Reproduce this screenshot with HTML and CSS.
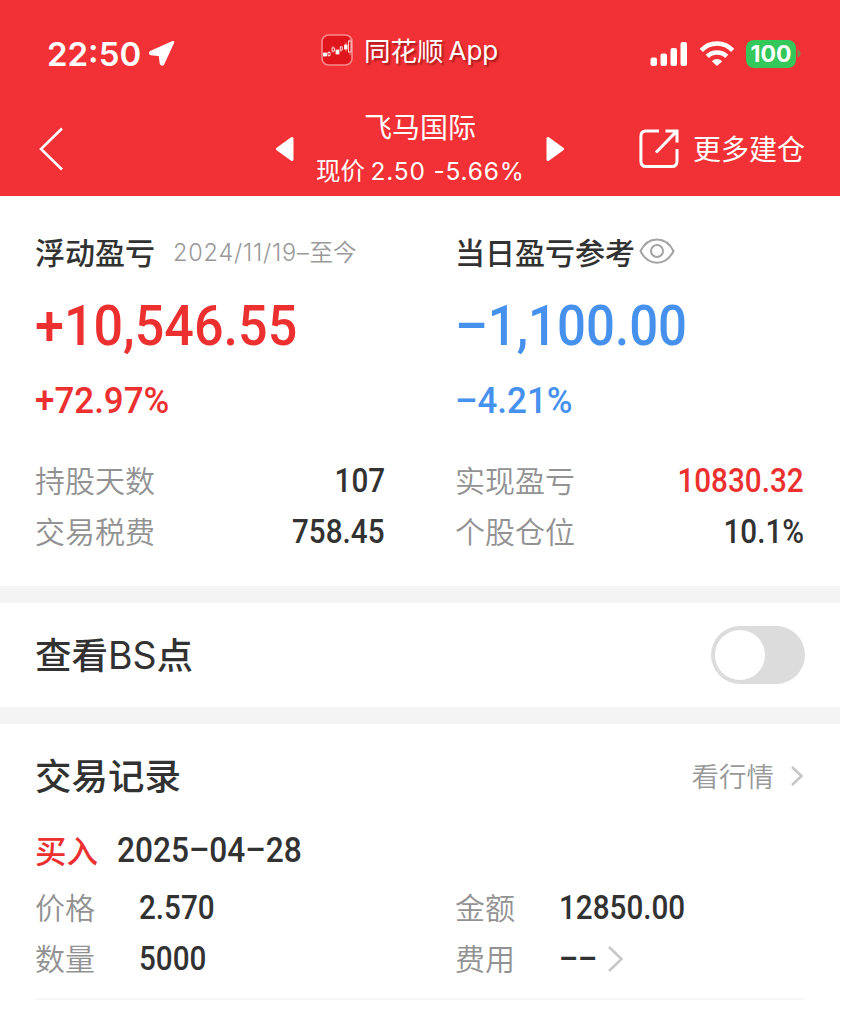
FILE: index.html
```html
<!DOCTYPE html>
<html lang="zh-CN">
<head>
    <meta charset="UTF-8">
    <meta name="viewport" content="width=device-width, initial-scale=1.0">
    <title>飞马国际</title>
    <link rel="stylesheet" href="styles.css">
</head>
<body>

<div class="page">
    <header class="header">
        <!-- Status bar -->
        <div class="status-bar">
            <div class="status-left">
                <span class="time">22:50</span>
                <svg class="location" width="27" height="27" viewBox="0 0 27 27">
                    <path d="M25 2.200 L2.600 12.200 Q1.600 13.500 3.200 14 L12 15 L13 23.500 Q14 25.500 15.200 23.500 Z" fill="#fff" stroke="#fff" stroke-width="2.600" stroke-linejoin="round"/>
                </svg>
            </div>
            <div class="brand">
                <svg class="brand-logo" width="32" height="32" viewBox="0 0 32 32">
                    <rect x="1" y="1" width="30" height="30" rx="6.500" fill="#e0161c" stroke="#f98a8c" stroke-width="1.600"/>
                    <g fill="#fff" stroke="#fff" stroke-width="0.800">
                        <rect x="2.500" y="19" width="3" height="3"/>
                        <path d="M8 17v6M12 12v7M20 12v6M25 8.500v9M29 5v16" opacity="0.6"/>
                        <rect x="7" y="18.500" width="2" height="3" fill="#e0161c"/>
                        <rect x="11" y="14" width="2.500" height="3" fill="#e0161c"/>
                        <rect x="15" y="16" width="3" height="4"/>
                        <rect x="19.200" y="13" width="2" height="3" fill="#e0161c"/>
                        <rect x="23.500" y="11" width="2.600" height="4"/>
                        <rect x="27.500" y="7" width="2.500" height="11" fill="#e0161c"/>
                    </g>
                </svg>
                <span class="brand-name">同花顺</span><span class="brand-app">App</span>
            </div>
            <div class="status-right">
                <svg width="38" height="26" viewBox="0 0 38 26" fill="#fff">
                    <rect x="0.500" y="16.500" width="6.500" height="8.500" rx="2"/>
                    <rect x="10.500" y="12.500" width="6.500" height="12.500" rx="2"/>
                    <rect x="20.500" y="7" width="6.500" height="18" rx="2"/>
                    <rect x="30.500" y="1" width="6.500" height="24" rx="2"/>
                </svg>
                <svg class="wifi" width="36" height="26" viewBox="0 0 36 26" fill="none" stroke="#fff" stroke-width="4.600">
                    <path d="M2.300 9.300 C11 0.300 25 0.300 33.700 9.300"/>
                    <path d="M8.300 15.300 C13.500 10.300 22.500 10.300 27.700 15.300"/>
                    <path d="M18 25 L12.800 20.200 Q18 15.800 23.200 20.200 Z" fill="#fff" stroke="none"/>
                </svg>
                <span class="battery">100</span>
                <svg width="4" height="9" viewBox="0 0 4 9"><path d="M0.500 0.500 Q3.500 1.500 3.500 4.500 T0.500 8.500 Z" fill="#7c8a48"/></svg>
            </div>
        </div>

        <!-- Navigation -->
        <nav class="nav-bar">
            <svg class="back" width="26" height="44" viewBox="0 0 26 44" fill="none" stroke="#fff" stroke-width="2.600">
                <path d="M24 1.500 L3 22 L24 42.500"/>
            </svg>
            <div class="stock">
                <svg width="20" height="26" viewBox="0 0 20 26"><path d="M2.500 13 L17 2.500 V23.500 Z" fill="#fff" stroke="#fff" stroke-width="3" stroke-linejoin="round"/></svg>
                <div class="stock-info">
                    <div class="stock-name">飞马国际</div>
                    <div class="stock-price">现价 <span>2.50 -5.66%</span></div>
                </div>
                <svg width="20" height="26" viewBox="0 0 20 26"><path d="M17.500 13 L3 2.500 V23.500 Z" fill="#fff" stroke="#fff" stroke-width="3" stroke-linejoin="round"/></svg>
            </div>
            <div class="more">
                <svg width="40" height="40" viewBox="0 0 40 40" fill="none" stroke="#fff" stroke-width="3">
                    <path d="M20 1.900 H7 Q1.900 1.900 1.900 7 V32 Q1.900 37.600 7 37.600 H33 Q38 37.600 38 32 V20"/>
                    <path d="M26.500 1.900 H38 V13.500 M38 1.900 L17 23.500"/>
                </svg>
                <span>更多建仓</span>
            </div>
        </nav>
    </header>

    <!-- Profit summary -->
    <section class="summary">
        <div class="summary-col">
            <div class="summary-title">浮动盈亏 <span class="period"><span class="period-num">2024/11/19–</span>至今</span></div>
            <div class="amount red">+10,546.55</div>
            <div class="percent red">+72.97%</div>
            <div class="row"><span class="label">持股天数</span><span class="num">107</span></div>
            <div class="row"><span class="label">交易税费</span><span class="num">758.45</span></div>
        </div>
        <div class="summary-col">
            <div class="summary-title">当日盈亏参考
                <svg class="eye" width="36" height="26" viewBox="0 0 36 26" fill="none" stroke="#a3a3a3" stroke-width="2">
                    <path d="M1.500 13 C9 -2.500 27 -2.500 34.500 13 C27 28.500 9 28.500 1.500 13 Z"/>
                    <circle cx="18" cy="13" r="6"/>
                </svg>
            </div>
            <div class="amount blue">–1,100.00</div>
            <div class="percent blue">–4.21%</div>
            <div class="row"><span class="label">实现盈亏</span><span class="num red">10830.32</span></div>
            <div class="row"><span class="label">个股仓位</span><span class="num">10.1%</span></div>
        </div>
    </section>

    <section class="bs">
        <div class="bs-title">查看<span>BS</span>点</div>
        <div class="switch"><div class="knob"></div></div>
    </section>

    <!-- Trade records -->
    <section class="records">
        <div class="records-head">
            <h2>交易记录</h2>
            <div class="quotes">
                <span>看行情</span>
                <svg width="14" height="22" viewBox="0 0 14 22" fill="none" stroke="#c6c6c6" stroke-width="2.600"><path d="M2 2 L11.500 11 L2 20"/></svg>
            </div>
        </div>
        <div class="record">
            <div class="record-title"><span class="buy">买入</span><span class="date">2025–04–28</span></div>
            <div class="record-grid">
                <div class="cell"><span class="label">价格</span><span class="num">2.570</span></div>
                <div class="cell"><span class="label">金额</span><span class="num">12850.00</span></div>
                <div class="cell"><span class="label">数量</span><span class="num">5000</span></div>
                <div class="cell"><span class="label">费用</span><span class="num">––</span>
                    <svg class="arrow" width="18" height="28" viewBox="0 0 18 28" fill="none" stroke="#c8c8c8" stroke-width="2.600"><path d="M2 2 L14.500 14 L2 26"/></svg>
                </div>
            </div>
        </div>
    </section>
</div>

</body>
</html>
```
FILE: styles.css
```css
* {
    box-sizing: border-box;
}
body {
    margin: 0;
    background-color: #fff;
    color: #323232;
    font-family: "Noto Sans CJK SC", sans-serif;
}
.page {
    width: 840px;
    height: 1024px;
    overflow: hidden;
}
.red { color: #ec3030; }
.blue { color: #4691ee; }

/* header */
.header {
    height: 196px;
    background-color: #f23136;
    color: #fff;
}
.status-bar {
    height: 104px;
    padding: 3px 39px 0 47px;
    display: grid;
    grid-template-columns: 274px 1fr auto;
    align-items: center;
}
.status-left, .brand, .status-right, .stock, .more, .quotes {
    display: flex;
    align-items: center;
}
.time {
    font: 600 33px/40px Inter, sans-serif;
}
.location {
    margin-left: 7px;
}
.brand {
    margin-bottom: 8px;
    text-shadow: 2px 2px 2px rgba(90, 0, 0, 0.5);
}
.brand-name {
    margin-left: 11px;
    font-size: 26.5px;
    line-height: 38px;
}
.brand-app {
    margin-left: 5px;
    padding-top: 2px;
    font: 400 26px/40px Inter, sans-serif;
}
.wifi {
    margin: 0 11px;
}
.battery {
    width: 50px;
    height: 28px;
    margin-right: 1px;
    border-radius: 8px;
    background-color: #34c759;
    font: 700 23px/28px Inter, sans-serif;
    text-align: center;
}
.nav-bar {
    height: 88px;
    padding: 0 35px 0 38px;
    display: grid;
    grid-template-columns: 237px 290px 1fr;
    align-items: center;
}
.stock {
    justify-content: space-between;
}
.stock-info {
    text-align: center;
    white-space: nowrap;
}
.stock-name {
    font-size: 28px;
    line-height: 44px;
}
.stock-price {
    font-size: 24.5px;
    line-height: 44px;
}
.stock-price span {
    font-family: Inter, sans-serif;
    letter-spacing: 0.8px;
    margin-right: -0.8px;
}
.more {
    justify-content: flex-end;
    gap: 14px;
    font-size: 28px;
}
.more span {
    line-height: 40px;
    padding-bottom: 2px;
}

/* summary */
.summary {
    height: 407px;
    padding: 36px 36px 0 35px;
    border-bottom: 17px solid #f4f4f4;
    display: grid;
    grid-template-columns: 350px 349px;
    column-gap: 70px;
}
.summary-title {
    height: 38px;
    display: flex;
    align-items: center;
    font-size: 30px;
    font-weight: 500;
}
.period {
    margin-left: 18px;
    font-size: 23.5px;
    font-weight: 350;
    color: #999;
}
.period-num {
    font-family: Inter, sans-serif;
    font-weight: 300;
    letter-spacing: 0.8px;
}
.eye {
    margin-left: 4px;
}
/* figures are squeezed a little to look like DIN */
.amount {
    margin-top: 20px;
    font: 500 56px/72px Roboto, sans-serif;
    transform: scaleX(0.93);
    transform-origin: left;
}
.amount.blue {
    transform: scaleX(0.91);
}
.percent {
    margin: 19px 0 34px;
    font: 500 37px/40px Roboto, sans-serif;
    transform: scaleX(0.945);
    transform-origin: left;
}
.row {
    height: 51px;
    display: flex;
    justify-content: space-between;
    align-items: center;
}
.label {
    font-size: 30px;
    font-weight: 350;
    line-height: 44px;
    padding-bottom: 3px;
    color: #929292;
}
.num {
    font: 500 33.5px/40px Roboto, sans-serif;
    transform: scaleX(0.885);
    transform-origin: right;
}

/* BS points */
.bs {
    height: 121px;
    padding: 0 35px;
    border-bottom: 17px solid #f4f4f4;
    display: flex;
    justify-content: space-between;
    align-items: center;
}
.bs-title {
    font-size: 36.5px;
    font-weight: 500;
    padding-bottom: 3px;
}
.bs-title span {
    font-family: Inter, sans-serif;
    font-size: 37.5px;
    font-weight: 400;
}
.switch {
    width: 94px;
    height: 58px;
    padding: 4px;
    border-radius: 29px;
    background-color: #dcdcdc;
}
.knob {
    width: 50px;
    height: 50px;
    border-radius: 50%;
    background-color: #fff;
}

/* records */
.records {
    padding: 26px 36px 0 35px;
}
.records-head {
    height: 52px;
    display: flex;
    justify-content: space-between;
    align-items: center;
}
.records-head h2 {
    margin: 0;
    padding-bottom: 3px;
    font-size: 36.5px;
    font-weight: 500;
}
.quotes {
    gap: 16px;
    font-size: 27.5px;
    color: #999;
    font-weight: 350;
}
.quotes span {
    padding-bottom: 2px;
}
.record {
    height: 198px;
    border-bottom: 2px solid #f7f7f7;
}
.record-title {
    height: 80px;
    padding-top: 18px;
    display: flex;
    align-items: center;
}
.buy {
    font-size: 31.5px;
    font-weight: 500;
    line-height: 50px;
    padding-bottom: 4px;
    color: #ec3030;
}
.date {
    margin-left: 19px;
    font: 500 35px/50px Roboto, sans-serif;
    transform: scaleX(0.905);
    transform-origin: left;
}
.record-grid {
    display: grid;
    grid-template-columns: 420px 1fr;
    grid-auto-rows: 51px;
}
.cell {
    display: flex;
    align-items: center;
}
.cell .label {
    width: 104px;
}
.cell .num {
    transform-origin: left;
}
.arrow {
    margin-left: 5px;
}
```
